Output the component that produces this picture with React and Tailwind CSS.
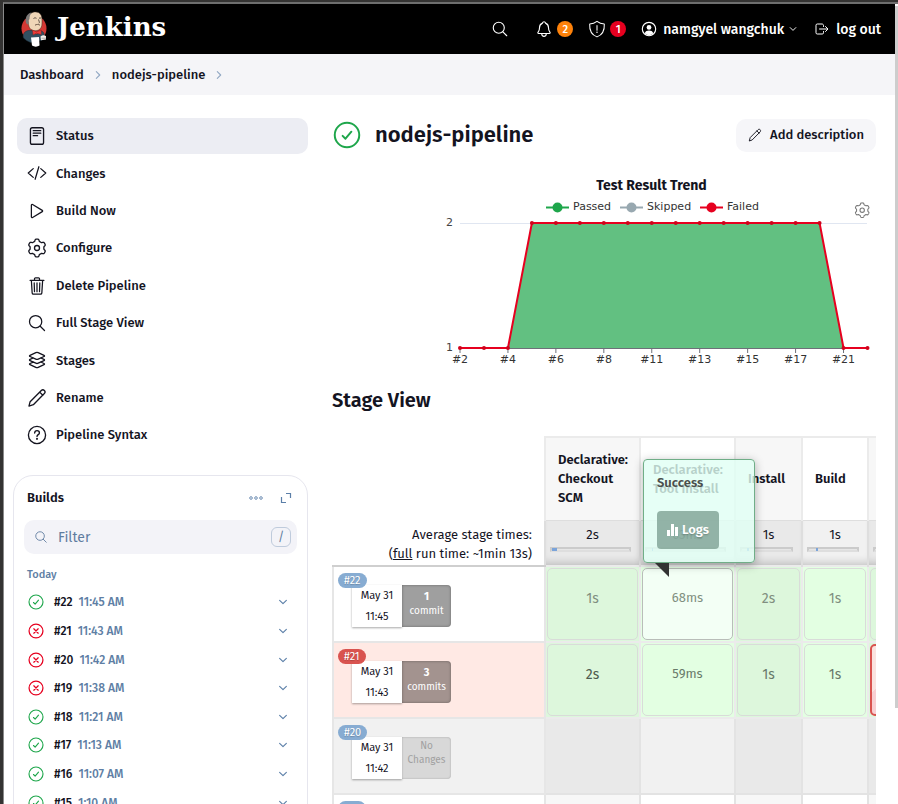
import {
  IoCodeSlashOutline,
  IoPlayOutline,
  IoSearchOutline,
  IoNotificationsOutline,
  IoChevronDownOutline,
  IoChevronForwardOutline,
  IoLogOutOutline,
} from 'react-icons/io5';

function StrokeIcon({ className, width = 32, children }) {
  return (
    <svg
      viewBox="0 0 512 512"
      className={className}
      fill="none"
      stroke="currentColor"
      strokeWidth={width}
      strokeLinecap="round"
      strokeLinejoin="round"
      aria-hidden="true"
    >
      {children}
    </svg>
  );
}

const StatusIcon = ({ className }) => (
  <StrokeIcon className={className} width={34}>
    <rect x="88" y="44" width="336" height="424" rx="48" />
    <path d="M160 120h192M160 184h192M160 248h110" />
  </StrokeIcon>
);

// Six-lobed gear outline, one lobe pointing straight up.
const GEAR_PATH = `M${Array.from({ length: 120 }, (_, i) => {
  const a = (i / 120) * Math.PI * 2;
  const r = 202 + 26 * Math.tanh(2.5 * Math.cos(6 * a));
  return `${(256 + r * Math.sin(a)).toFixed(1)} ${(256 - r * Math.cos(a)).toFixed(1)}`;
}).join('L')}Z`;

const GearIcon = ({ className }) => (
  <StrokeIcon className={className} width={34}>
    <path d={GEAR_PATH} />
    <circle cx="256" cy="256" r="64" />
  </StrokeIcon>
);

const TrashIcon = ({ className }) => (
  <StrokeIcon className={className}>
    <path d="M112 112l20 320c.95 18.49 14.4 32 32 32h184c17.67 0 30.87-13.51 32-32l20-320M80 112h352M192 112V72a23.93 23.93 0 0124-24h80a23.93 23.93 0 0124 24v40M256 176v224M184 176l8 224M328 176l-8 224" />
  </StrokeIcon>
);

const LayersIcon = ({ className }) => (
  <StrokeIcon className={className} width={34}>
    <path d="M434.8 137.65l-149.36-68.1c-16.19-7.4-42.69-7.4-58.88 0L77.3 137.65c-17.6 8-17.6 21.09 0 29.09l148 67.5c16.89 7.7 44.69 7.7 61.58 0l148-67.5c17.52-8 17.52-21.1-.08-29.09zM160 308.52l-82.7 37.11c-17.6 8-17.6 21.1 0 29.1l148 67.5c16.89 7.69 44.69 7.69 61.58 0l148-67.5c17.6-8 17.6-21.1 0-29.1l-79.94-38.47M160 204.48l-82.8 37.16c-17.6 8-17.6 21.1 0 29.1l148 67.49c16.89 7.7 44.69 7.7 61.58 0l148-67.49c17.7-8 17.7-21.1.1-29.1L352 204.48" />
  </StrokeIcon>
);

const PencilIcon = ({ className }) => (
  <StrokeIcon className={className} width={34}>
    <path d="M50 462l30-112L366 64c24-24 58-22 78-2s24 54 0 80L162 428zM324 106l82 82" />
  </StrokeIcon>
);

const HelpIcon = ({ className }) => (
  <StrokeIcon className={className} width={34}>
    <circle cx="256" cy="256" r="220" />
    <path d="M196 204c2-44 30-58 60-58 34 0 62 22 62 56 0 44-62 46-62 90" />
    <circle cx="256" cy="354" r="10" fill="currentColor" />
  </StrokeIcon>
);

const ShieldIcon = ({ className }) => (
  <StrokeIcon className={className} width={30}>
    <path d="M464 112c-97 0-160-34-208-72C208 78 145 112 48 112c-10 176 40 304 208 368 168-64 218-192 208-368zM256 160v128" />
    <circle cx="256" cy="350" r="8" fill="currentColor" />
  </StrokeIcon>
);

const PersonIcon = ({ className }) => (
  <StrokeIcon className={className} width={36}>
    <circle cx="256" cy="256" r="214" />
    <circle cx="256" cy="206" r="76" fill="currentColor" stroke="none" />
    <path d="M118 390c20-62 76-84 138-84s118 22 138 84c-36 38-82 58-138 58s-102-20-138-58z" fill="currentColor" stroke="none" />
  </StrokeIcon>
);

const PassIcon = ({ className }) => (
  <StrokeIcon className={className} width={36}>
    <circle cx="256" cy="256" r="224" />
    <path d="M176 272l52 52 108-128" />
  </StrokeIcon>
);

const FailIcon = ({ className }) => (
  <StrokeIcon className={className} width={40}>
    <circle cx="256" cy="256" r="222" />
    <path d="M186 186l140 140M326 186L186 326" />
  </StrokeIcon>
);

function JenkinsLogo() {
  return (
    <svg viewBox="0 0 26 36" className="h-9 w-[26px]" aria-hidden="true">
      <ellipse cx="13" cy="17.5" rx="12.500" ry="13" fill="#d33833" />
      <path d="M3.500 21.500c2-2 5-2.500 7.500-2l4.500 4 5-3.500c2.500 1 3 3 2.500 5.500l-1.500 3.500-12 2.500-4-2-3-2.500c-.8-2 0-4 1-5.500z" fill="#335061" stroke="#1d2d38" strokeWidth=".5" />
      <path d="M7 8C7.500 3 11 .8 14.500.9 19 1 21 4 21 9c0 4.500.2 6.500-1.800 8.800-2 2.200-5.700 2.500-8.200 1.200C8 17.500 7 14 7 8z" fill="#f0d6b7" stroke="#3b2a20" strokeWidth=".5" />
      <path d="M6.500 13.500C4 12 4.300 7 6 4.500 7.500 2.500 9 1.700 10.500 1.500 8.800 4 8.500 6 8.500 8l-1 1.500.5 3z" fill="#7d7a78" />
      <path d="M12.500 7.500c1-.8 2-.8 3-.2M18 7.200c.8-.4 1.500-.4 2 0M17.500 8.500c.5 2 1.500 3 .3 3.800" fill="none" stroke="#332b27" strokeWidth=".8" />
      <path d="M14 14.200c1.500-1 3.500-1 5 0" fill="none" stroke="#6b5546" strokeWidth="1" />
      <path d="M11.500 19l4 2 4.500-2 .3 4.500-4.800-1.300-3.500 1.800z" fill="#ef3d3a" stroke="#7d1c19" strokeWidth=".4" />
      <path d="M10 26.500l8-.5.5 8.500c-2 1.500-5.500 1.500-7.500 0z" fill="#fff" />
      <path d="M19.500 25.500c2-1.500 4-1.500 5.500-.3v3.300l-5 .7z" fill="#f5f0ea" />
      <path d="M20.500 27.200h4.500" stroke="#777" strokeWidth=".6" />
    </svg>
  );
}

const TASKS = [
  { label: 'Status', Icon: StatusIcon, active: true },
  { label: 'Changes', Icon: IoCodeSlashOutline },
  { label: 'Build Now', Icon: IoPlayOutline },
  { label: 'Configure', Icon: GearIcon },
  { label: 'Delete Pipeline', Icon: TrashIcon },
  { label: 'Full Stage View', Icon: IoSearchOutline },
  { label: 'Stages', Icon: LayersIcon },
  { label: 'Rename', Icon: PencilIcon },
  { label: 'Pipeline Syntax', Icon: HelpIcon },
];

const BUILDS = [
  { id: 22, time: '11:45 AM', ok: true },
  { id: 21, time: '11:43 AM', ok: false },
  { id: 20, time: '11:42 AM', ok: false },
  { id: 19, time: '11:38 AM', ok: false },
  { id: 18, time: '11:21 AM', ok: true },
  { id: 17, time: '11:13 AM', ok: true },
  { id: 16, time: '11:07 AM', ok: true },
  { id: 15, time: '1:10 AM', ok: true },
];

function Header() {
  return (
    <header className="flex h-[50px] shrink-0 items-center bg-black pr-3.5 pl-[17px] text-white">
      <a href="#home" className="flex items-center gap-2.5">
        <JenkinsLogo />
        <span className="pb-1 font-['DejaVu_Serif',serif] text-[26px] leading-8 font-bold">Jenkins</span>
      </a>
      <nav className="ml-auto flex items-center text-[14px] font-medium">
        <button aria-label="Search" className="mr-[26px]">
          <IoSearchOutline className="size-[18px]" />
        </button>
        <button aria-label="Notifications" className="mr-[15px] flex items-center gap-1">
          <IoNotificationsOutline className="size-[18px]" />
          <span className="grid size-4 place-items-center rounded-full bg-[#fe820a] text-[11px] leading-none">2</span>
        </button>
        <button aria-label="Security warnings" className="mr-[15px] flex items-center gap-1">
          <ShieldIcon className="size-[18px]" />
          <span className="grid size-4 place-items-center rounded-full bg-[#e6001f] text-[11px] leading-none">1</span>
        </button>
        <a href="#user" className="flex items-center gap-1.5">
          <PersonIcon className="size-4" />
          namgyel wangchuk
        </a>
        <button aria-label="User menu" className="mr-4 ml-1">
          <IoChevronDownOutline className="size-2.5" />
        </button>
        <a href="#logout" className="flex items-center gap-1.5">
          <IoLogOutOutline className="size-4" />
          log out
        </a>
      </nav>
    </header>
  );
}

function Breadcrumbs() {
  return (
    <nav aria-label="Breadcrumb" className="flex h-[41px] shrink-0 items-center gap-2 bg-[#f5f5f8] px-4 text-[13px] font-medium">
      <a href="#dashboard">Dashboard</a>
      <IoChevronForwardOutline className="size-3 text-[#93a9c4]" />
      <a href="#pipeline">nodejs-pipeline</a>
      <IoChevronForwardOutline className="size-3 text-[#93a9c4]" />
    </nav>
  );
}

function BuildsCard() {
  return (
    <section className="mt-[22px] rounded-[20px] border border-[#e6e6ee] px-2.5 pb-3">
      <div className="flex h-11 items-center px-[3px]">
        <h2 className="text-[13px] font-semibold">Builds</h2>
        <button aria-label="More options" className="mr-4 ml-auto text-[#6f8fb4]">
          <svg viewBox="0 0 16 16" className="size-4" fill="none" stroke="currentColor">
            <circle cx="3" cy="8" r="1.300" />
            <circle cx="8" cy="8" r="1.300" />
            <circle cx="13" cy="8" r="1.300" />
          </svg>
        </button>
        <button aria-label="Expand" className="mr-0.5 text-[#5b7fa8]">
          <svg viewBox="0 0 12 12" className="size-3" fill="none" stroke="currentColor" strokeWidth="1.200">
            <path d="M6 1.500h4.500V6M1.500 5v5.500H6" />
          </svg>
        </button>
      </div>
      <label className="flex h-[34px] items-center rounded-[10px] bg-[#f3f3f8] pr-1.5 pl-2.5 text-[#5f7c9f]">
        <IoSearchOutline className="size-3.5" />
        <span className="sr-only">Filter builds</span>
        <input
          placeholder="Filter"
          className="ml-2.5 h-full min-w-0 flex-1 bg-transparent text-[14px] outline-none placeholder:text-[#5f7c9f]"
        />
        <kbd className="grid size-5 place-items-center rounded-[6px] border border-[#bfcbdc] font-['Fira_Sans','Roboto',sans-serif] text-[12px] leading-none">/</kbd>
      </label>
      <h3 className="mt-3 px-[3px] text-[11px] leading-[18px] font-medium text-[#5f7fa5]">Today</h3>
      <ul className="mt-1 flex h-[229px] flex-col">
        {BUILDS.map(({ id, time, ok }) => (
          <li key={id} className="flex flex-1 items-center px-1 text-[12px] font-medium">
            {ok ? <PassIcon className="size-4 text-[#1ea64b]" /> : <FailIcon className="size-4 text-[#e6001f]" />}
            <a href="#build" className="ml-2.5">
              #{id}
            </a>
            <span className="ml-1.5 text-[#5f7fa5]">{time}</span>
            <button aria-label={`Build ${id} menu`} className="ml-auto pr-1 text-[#5b7fa8]">
              <IoChevronDownOutline className="size-3" />
            </button>
          </li>
        ))}
      </ul>
    </section>
  );
}

function Sidebar() {
  return (
    <aside className="w-[304px] shrink-0 pl-[9px]">
      <nav className="flex h-[335px] flex-col justify-between pl-1 text-[13px] font-medium">
        {TASKS.map(({ label, Icon, active }) => (
          <a
            key={label}
            href="#task"
            className={`flex h-9 items-center gap-[9px] rounded-[10px] px-2.5 ${active ? 'bg-[#ecedf3]' : ''}`}
          >
            <Icon className="size-5" />
            {label}
          </a>
        ))}
      </nav>
      <BuildsCard />
    </aside>
  );
}

const TREND = [1, 1, 1, 2, 2, 2, 2, 2, 2, 2, 2, 2, 2, 2, 2, 2, 1, 1];
const TICKS = ['#2', '#4', '#6', '#8', '#11', '#13', '#15', '#17', '#21'];
const LEGEND = [
  { name: 'Passed', color: '#1ea64b', x: 114 },
  { name: 'Skipped', color: '#98a8b0', x: 188 },
  { name: 'Failed', color: '#e6001f', x: 268 },
];
const px = (i) => 28 + (i * 407.5) / 17;
const py = (v) => (v === 2 ? 51 : 176);

function TrendChart() {
  const line = TREND.map((v, i) => `${px(i)},${py(v)}`).join(' ');
  return (
    <figure className="mt-5 flex justify-end">
      <svg viewBox="0 0 444 200" className="h-[200px] w-[444px] max-w-full font-['DejaVu_Sans',sans-serif]">
        <text x="219.5" y="18" textAnchor="middle" className="fill-[#14141f] font-['Fira_Sans','Roboto',sans-serif] text-[14px] font-bold">
          Test Result Trend
        </text>
        {LEGEND.map(({ name, color, x }) => (
          <g key={name}>
            <path d={`M${x} 35.500h23`} stroke={color} strokeWidth="2" />
            <circle cx={x + 11.5} cy="35.500" r="5" fill={color} />
            <text x={x + 27} y="38" className="fill-[#333] text-[11px]">
              {name}
            </text>
          </g>
        ))}
        <path d="M28 51.500h407" stroke="#e0e6f1" />
        <text x="21" y="54" textAnchor="end" className="fill-[#444] text-[11px]">2</text>
        <text x="21" y="179" textAnchor="end" className="fill-[#444] text-[11px]">1</text>
        <polygon points={`${px(2)},176 ${px(3)},51 ${px(15)},51 ${px(16)},176`} fill="#62c081" />
        <path d="M28 176.500h407.500" stroke="#6e7079" />
        {TICKS.map((t, i) => (
          <g key={t}>
            <path d={`M${px(i * 2)} 176v5`} stroke="#6e7079" />
            <text x={px(i * 2)} y="191" textAnchor="middle" className="fill-[#333] text-[11px]">
              {t}
            </text>
          </g>
        ))}
        <polyline points={line} fill="none" stroke="#e6001f" strokeWidth="2" strokeLinejoin="bevel" />
        {TREND.map((v, i) => (
          <circle key={i} cx={px(i)} cy={py(v)} r="2" fill="#d0021b" />
        ))}
        <g transform="translate(422 30) scale(.032)" fill="none" stroke="#7a7a7a" strokeWidth="34">
          <path d={GEAR_PATH} />
          <circle cx="256" cy="256" r="68" />
        </g>
      </svg>
    </figure>
  );
}

const STAGES = [
  { name: 'Declarative: Checkout SCM', avg: '2s', fill: 5, start: 0, shade: true },
  { name: 'Declarative: Tool Install', avg: '63ms', fill: 1, start: 5 },
  { name: 'Install', avg: '1s', fill: 2, start: 5, shade: true },
  { name: 'Build', avg: '1s', fill: 2, start: 7 },
  { name: '', avg: '', fill: 0, start: 0, shade: true },
];

const RUNS = [
  { id: 22, time: '11:45', commits: ['1', 'commit'], cells: ['1s', '68ms', '2s', '1s', ''] },
  { id: 21, time: '11:43', commits: ['3', 'commits'], failed: true, cells: ['2s', '59ms', '1s', '1s', ''] },
  { id: 20, time: '11:42', cells: null },
  { id: 19, time: '11:38', cells: null, blank: true },
];

function RunCell({ run }) {
  const tone = run.failed ? 'bg-[#ffe9e4]' : run.id === 20 ? 'bg-[#f1f1f1]' : 'bg-white';
  return (
    <th scope="row" className={`h-[76px] border-2 border-[#e6e6e6] p-0 align-top font-normal ${tone}`}>
      <div className="relative mt-[18px] ml-[18px] flex h-[42px] w-[100px] text-[11px]">
        <span
          className={`absolute -top-3 -left-3.5 rounded-full px-1.5 leading-[15px] text-white text-shadow-xs ${
            run.failed ? 'bg-[#d9534f]' : 'bg-[#87acd2]'
          }`}
        >
          #{run.id}
        </span>
        <div className="flex w-[50px] flex-col items-center bg-white leading-[21px] shadow-[0_1px_2px_rgba(0,0,0,0.35)]">
          <span>May 31</span>
          <span>{run.time}</span>
        </div>
        {run.commits ? (
          <div
            className={`flex w-[49px] flex-col items-center justify-center rounded-r-[4px] pb-1 leading-[14px] text-white shadow-[inset_0_0_3px_rgba(0,0,0,0.35)] ${
              run.failed ? 'bg-[#a3938f]' : 'bg-[#9f9f9f]'
            }`}
          >
            <b>{run.commits[0]}</b>
            <span className="text-[10px]">{run.commits[1]}</span>
          </div>
        ) : (
          <div className="w-[49px] rounded-r-[4px] bg-[#d8d8d8] pt-0.5 text-center text-[10px] leading-[14px] text-[#a0a0a0] shadow-[inset_0_0_2px_rgba(0,0,0,0.25)]">
            No Changes
          </div>
        )}
      </div>
    </th>
  );
}

function StageCell({ run, index }) {
  const shade = STAGES[index].shade;
  if (!run.cells) {
    const tone = run.blank ? (shade ? 'bg-[#f7f7f7]' : 'bg-white') : shade ? 'bg-[#e9e9e9]' : 'bg-[#f1f1f1]';
    return <td className={`border-2 border-[#e3e3e3] ${tone}`} />;
  }
  const hovered = run.id === 22 && index === 1;
  const failedCell = run.failed && index === 4;
  const tone = failedCell
    ? 'border-2 border-[#d9534f] bg-[linear-gradient(135deg,#fae3df_30%,#f8cfd2_30%,#f8cfd2_60%,#fae3df_60%)]'
    : hovered
      ? 'border border-[#b9bdb9] bg-[#f3fff5]'
      : shade
        ? 'border border-[#d9dcd9] bg-[#ddf7dc]'
        : 'border border-[#d9dcd9] bg-[#e3ffe2]';
  const size = index === 1 ? 'text-[13px]' : 'text-[14px]';
  const color = run.failed ? (index === 0 ? 'text-[#4e5a4e]' : 'text-[#697a6a]') : 'text-[#808f80]';
  return (
    <td className={`border-2 border-[#ebebeb] p-px ${shade ? 'bg-[#ddf7dc]' : 'bg-[#e3ffe2]'}`}>
      <div className={`flex h-[72px] items-center justify-center rounded-[5px] pb-3 ${tone} ${size} ${color}`}>
        {run.cells[index]}
      </div>
    </td>
  );
}

function StageView() {
  return (
    <div className="relative mt-[22px] overflow-hidden">
      <table className="w-[630px] table-fixed border-collapse">
        <colgroup>
          <col className="w-[212px]" />
          <col className="w-[95px]" />
          <col className="w-[95px]" />
          <col className="w-[67px]" />
          <col className="w-[66px]" />
          <col className="w-[95px]" />
        </colgroup>
        <thead>
          <tr>
            <td rowSpan={2} className="border-b-2 border-[#cfcfcf] pr-3 pb-0.5 text-right align-bottom text-[13px] leading-[19px]">
              Average stage times:
              <br />(<a href="#full" className="underline">full</a> run time: ~1min 13s)
            </td>
            {STAGES.map((s, i) => (
              <th
                key={i}
                scope="col"
                className={`h-[83px] border-2 border-b-0 border-[#ebebeb] px-3 text-left text-[13px] leading-[19px] font-semibold ${
                  s.shade ? 'bg-[#f7f7f7]' : 'bg-white'
                }`}
              >
                {s.name}
              </th>
            ))}
          </tr>
          <tr>
            {STAGES.map((s, i) => (
              <td
                key={i}
                className={`h-[46px] border-x-2 border-t border-[#dedede] px-1 pt-[5px] text-center align-top text-[13px] leading-[18px] shadow-[inset_0_-8px_8px_-6px_rgba(0,0,0,0.2)] ${
                  s.shade ? 'bg-[#e9e9e9]' : 'bg-[#f1f1f1]'
                }`}
              >
                {s.avg || '\u00a0'}
                <div className="mt-[3px] mr-1 h-[5px] border-2 border-[#cbcbcb] border-b-[#dedede] bg-[#e6e6e6]">
                  <div className="-mt-px h-[3px] bg-[#7ba4da]" style={{ width: s.fill, marginLeft: s.start }} />
                </div>
              </td>
            ))}
          </tr>
        </thead>
        <tbody>
          {RUNS.map((run) => (
            <tr key={run.id}>
              <RunCell run={run} />
              {STAGES.map((s, i) => (
                <StageCell key={i} run={run} index={i} />
              ))}
            </tr>
          ))}
        </tbody>
      </table>
      <div
        role="tooltip"
        className="absolute top-[23px] left-[311px] h-[104px] w-28 rounded-[4px] border border-[#70ae88] bg-[#e0fff4]/80 px-[13px] pt-3.5 shadow-[0_2px_10px_rgba(0,0,0,0.3)]"
      >
        <p className="text-[13px] leading-[18px] font-semibold text-[#4b4f4d]">Success</p>
        <button className="mt-[19px] flex h-[38px] w-[62px] items-center justify-center gap-1 rounded-[4px] bg-[#6f9486]/70 text-[13px] font-semibold text-white text-shadow-sm">
          <svg viewBox="0 0 11 12" className="h-3 w-[11px]" fill="currentColor">
            <path d="M0 6h3v6H0zM4 0h3v12H4zM8 3h3v9H8z" />
          </svg>
          Logs
        </button>
        <svg viewBox="0 0 14 14" className="absolute top-[103px] left-[11px] size-3.5 fill-[#333]" aria-hidden="true">
          <path d="M0 0h14v14z" />
        </svg>
      </div>
    </div>
  );
}

function Main() {
  return (
    <main className="min-w-0 flex-1 pr-[19px] pl-6">
      <div className="flex h-[34px] items-center">
        <PassIcon className="ml-px size-7 text-[#1ea64b]" />
        <h1 className="ml-3.5 text-[22px] leading-7 font-semibold">nodejs-pipeline</h1>
        <button className="ml-auto flex h-[33px] items-center gap-2 rounded-[10px] bg-[#f6f6f9] px-3 text-[13px] font-medium">
          <PencilIcon className="size-3.5" />
          Add description
        </button>
      </div>
      <TrendChart />
      <h2 className="mt-3.5 text-[20px] leading-7 font-semibold">Stage View</h2>
      <StageView />
    </main>
  );
}

export default function App() {
  return (
    <div className="h-screen overflow-hidden bg-[#343332] pt-[2px] pl-[3px] font-['Fira_Sans','Roboto',sans-serif] text-[#14141f]">
      <div className="flex h-full overflow-hidden border-t-2 border-l border-t-[#6e6e6e] border-l-[#8a8a8a] bg-white">
        <div className="flex min-w-0 flex-1 flex-col">
          <Header />
          <Breadcrumbs />
          <div className="flex min-h-0 flex-1 overflow-hidden pt-[23px]">
            <Sidebar />
            <Main />
          </div>
        </div>
        <div className="w-[3px] shrink-0 bg-white pt-0.5">
          <div className="h-[88%] bg-[#cdcdcd]" />
        </div>
      </div>
    </div>
  );
}
